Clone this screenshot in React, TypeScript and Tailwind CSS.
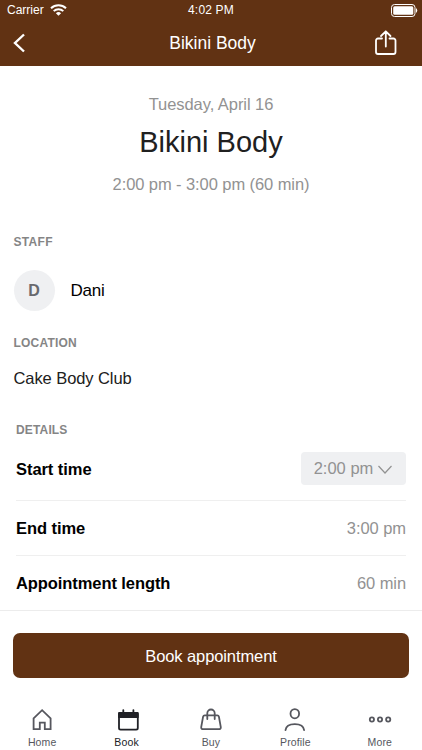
import React from 'react';

type IconProps = { children: React.ReactNode };

function TabIcon({ children }: IconProps) {
  return (
    <svg className="block h-6 w-6 overflow-visible" viewBox="0 0 24 24" fill="none" stroke="currentColor" strokeWidth="1.8" strokeLinecap="round" strokeLinejoin="round">
      {children}
    </svg>
  );
}

const tabs = [
  {
    label: 'Home',
    active: false,
    icon: <path d="M3.600 10.300 12.100 2.200l8.500 8.100v10.900h-5.800v-6.600h-5v6.600H3.600Z" strokeLinejoin="miter" />,
  },
  {
    label: 'Book',
    active: true,
    icon: (
      <>
        <rect x="4" y="4.800" width="18.800" height="16.900" rx="1.600" />
        <path d="M4 5h18.800v4.200H4Z" fill="currentColor" />
        <path d="M8.300 2.100v3M18.400 2.100v3" />
      </>
    ),
  },
  {
    label: 'Buy',
    active: false,
    icon: (
      <>
        <path d="M5.800 7.300h12.400a1.700 1.700 0 0 1 1.700 1.300l1.900 10.500a1.800 1.800 0 0 1-1.800 2.100H4a1.800 1.800 0 0 1-1.800-2.100L4.100 8.600a1.700 1.700 0 0 1 1.700-1.300Z" />
        <path d="M8.300 11V5.200a3.700 3.700 0 0 1 7.400 0V11" />
      </>
    ),
  },
  {
    label: 'Profile',
    active: false,
    icon: (
      <>
        <ellipse cx="11.800" cy="5.700" rx="4.300" ry="4.600" />
        <path d="M2.500 22.200c.4-3.800 3.700-6.100 9.300-6.100s8.900 2.300 9.300 6.100" />
      </>
    ),
  },
  {
    label: 'More',
    active: false,
    icon: (
      <>
        <circle cx="3.900" cy="11.500" r="2.100" />
        <circle cx="12" cy="11.500" r="2.100" />
        <circle cx="20.200" cy="11.500" r="2.100" />
      </>
    ),
  },
];

export default function App() {
  return (
    <div className="flex h-[750px] w-full flex-col overflow-hidden bg-white font-['Liberation_Sans',Arial,sans-serif] text-black">
      <header className="h-[66px] shrink-0 bg-[#613213] text-white">
        <div className="grid h-5 grid-cols-3 items-center pr-1 pl-[7px] text-[12px] leading-5">
          <div className="flex items-center gap-[6px]">
            <span>Carrier</span>
            <svg className="h-3 w-[17px]" viewBox="0 0 17 12" fill="none" stroke="white" strokeWidth="2">
              <path d="M1 4.200a10.800 10.800 0 0 1 15 0M3.700 7.100a6.900 6.900 0 0 1 9.600 0" />
              <path d="M5.900 9.200a3.800 3.800 0 0 1 5.200 0L8.500 11.800Z" fill="white" stroke="none" />
            </svg>
          </div>
          <span className="-ml-[3px] text-center tracking-[0.180px]">4:02 PM</span>
          <svg className="h-[13px] w-[27px] justify-self-end" viewBox="0 0 27 13">
            <rect x=".5" y=".5" width="23.500" height="12" rx="3" fill="none" stroke="white" />
            <rect x="2.200" y="2.200" width="20.100" height="8.600" rx="1.500" fill="white" />
            <path d="M25 4q2.500 2.500 0 5Z" fill="white" />
          </svg>
        </div>
        <div className="grid h-[46px] grid-cols-[60px_1fr_60px] items-center">
          <button className="pl-[13px]" aria-label="Back">
            <svg className="block h-5 w-3" viewBox="0 0 12 20" fill="none" stroke="white" strokeWidth="2.400">
              <path d="m11 1.500-9 8.500 9 8.500" />
            </svg>
          </button>
          <h1 className="pl-[3px] text-center text-[17.500px] leading-6">Bikini Body</h1>
          <button className="justify-self-end pr-[24px]" aria-label="Share">
            <svg className="block h-[26px] w-6" viewBox="0 0 24 26" fill="none" stroke="white" strokeWidth="1.800" strokeLinecap="round" strokeLinejoin="round">
              <path d="M8 8.500H4a2 2 0 0 0-2 2v11.500a2 2 0 0 0 2 2h15.500a2 2 0 0 0 2-2v-11.500a2 2 0 0 0-2-2h-4M11.800 16.500V1.500M7 6 11.800 1.300l4.700 4.700" />
            </svg>
          </button>
        </div>
      </header>

      <main className="flex h-[545px] shrink-0 flex-col border-b border-[#ececec]">
        <section className="pt-[26px] text-center">
          <p className="text-[16.500px] leading-6 tracking-[-0.060px] text-[#929292]">Tuesday, April 16</p>
          <h2 className="mt-[6px] text-[29px] leading-10 text-[#202020]">Bikini Body</h2>
          <p className="mt-[10px] text-[16.500px] leading-6 tracking-[-0.080px] text-[#929292]">2:00 pm - 3:00 pm (60 min)</p>
        </section>

        <section className="pr-[13px] pl-[13.500px] pt-[38px]">
          <h3 className="text-[12px] leading-4 font-bold tracking-[0.300px] text-[#858585]">STAFF</h3>
          <div className="mt-5 flex items-center gap-4">
            <div className="flex h-[41px] w-[41px] items-center justify-center rounded-full bg-[#eff0f2] text-[16px] font-bold text-[#68696e]">D</div>
            <span className="text-[17px] leading-6 tracking-[-0.200px]">Dani</span>
          </div>
          <h3 className="mt-6 text-[12px] leading-4 font-bold tracking-[0.200px] text-[#858585]">LOCATION</h3>
          <p className="mt-[15px] text-[16.500px] leading-6 tracking-[-0.080px] text-[#202020]">Cake Body Club</p>
        </section>

        <section className="pt-8 pr-4 pl-4">
          <h3 className="text-[12px] leading-4 font-bold tracking-[0.150px] text-[#858585]">DETAILS</h3>
          <div className="flex h-[63px] items-center justify-between border-b border-[#efefef]">
            <span className="text-[16.500px] leading-6 font-bold tracking-[-0.060px]">Start time</span>
            <button className="-mt-[2px] flex h-[33px] w-[105px] items-center justify-center gap-1 rounded-[4px] bg-[#eff0f2] text-[16.500px] text-[#929292]">
              2:00 pm
              <svg className="mt-[3px] h-3 w-4" viewBox="0 0 16 12" fill="none" stroke="currentColor" strokeWidth="1.200"><path d="m1.500 2 6.500 7 6.500-7" /></svg>
            </button>
          </div>
          <div className="flex h-[55px] items-center justify-between border-b border-[#efefef] text-[16.500px] tracking-[-0.060px]">
            <span className="font-bold">End time</span><span className="text-[#929292]">3:00 pm</span>
          </div>
          <div className="flex h-[55px] items-center justify-between text-[16.500px] tracking-[-0.080px]">
            <span className="font-bold">Appointment length</span><span className="text-[#929292]">60 min</span>
          </div>
        </section>
      </main>

      <div className="px-[13px] pt-[22px]">
        <button className="h-[45px] w-full rounded-[7px] bg-[#613213] pt-px text-[16.500px] tracking-[-0.100px] text-white">Book appointment</button>
      </div>
      <nav className="mt-[30px] grid grid-cols-5">
        {tabs.map((tab) => (
          <button key={tab.label} className={`flex flex-col items-center gap-[4px] ${tab.active ? 'text-[#202126]' : 'text-[#56575e]'}`}>
            <TabIcon>{tab.icon}</TabIcon>
            <span className="text-[10.500px] leading-3 tracking-[0.150px]">{tab.label}</span>
          </button>
        ))}
      </nav>
    </div>
  );
}
